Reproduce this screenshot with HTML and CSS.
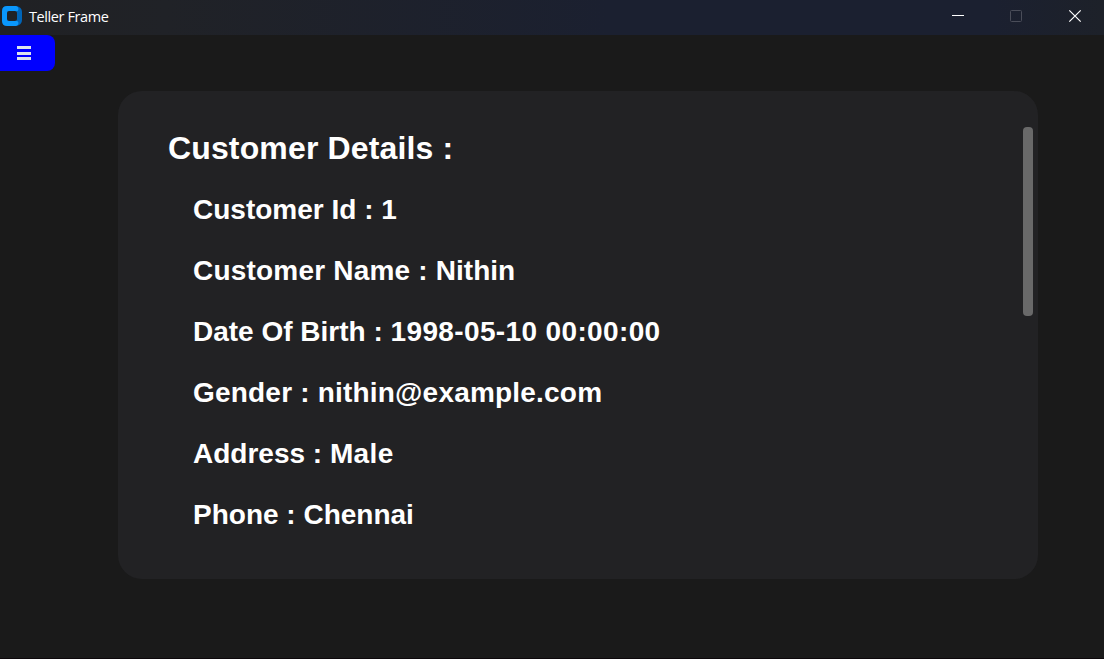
FILE: index.html
```html
<!DOCTYPE html>
<html lang="en">
<head>
<meta charset="utf-8">
<title>Teller Frame</title>
<link rel="stylesheet" href="styles.css">
</head>
<body>
<div class="window">
  <header class="titlebar">
    <svg class="logo" width="20" height="20" viewBox="0 0 20 20">
      <path d="M14 0Q20 1 20 6V14Q20 19 14 20Z" fill="#0065b8"/>
      <path d="M5 0H14Q16.5 .5 16.5 3Q16.5 5 14 5.5V14.5Q16.5 15 16.5 17Q16.5 19.500 14 20H5Q0 20 0 15V5Q0 0 5 0Z" fill="#0a97fc"/>
      <rect x="5" y="5" width="10" height="10" rx="2" fill="#202226"/>
    </svg>
    <span class="title">Teller Frame</span>
    <div class="controls">
      <svg width="58" height="35" viewBox="0 0 58 35"><path d="M22 15.5H34" stroke="#fff"/></svg>
      <svg width="58" height="35" viewBox="0 0 58 35"><rect x="22.5" y="10.5" width="11" height="11" rx="1" fill="none" stroke="#4a4d59"/></svg>
      <svg width="58" height="35" viewBox="0 0 58 35"><path d="M23.3 10.3L34.7 21.7M34.7 10.3L23.3 21.7" stroke="#fff" stroke-width="1.2"/></svg>
    </div>
  </header>
  <button class="menu" aria-label="Menu">
    <svg width="14" height="14" viewBox="0 0 14 14"><path d="M0 1.5H14M0 7.5H14M0 12.5H14" stroke="#dce4ee" stroke-width="3"/></svg>
  </button>
  <main class="card">
    <section class="details">
      <h1 class="heading">Customer Details :</h1>
      <p class="row compact">Customer Id : 1</p>
      <p class="row">Customer Name : <span class="compact">Nithin</span></p>
      <p class="row"><span class="compact">Date Of Birth : </span><span class="wide">1998-05-10 00:00:00</span></p>
      <p class="row">Gender : nithin@example.com</p>
      <p class="row compact">Address : <span class="wide">Male</span></p>
      <p class="row compact">Phone : Chennai</p>
    </section>
    <div class="scrollbar"></div>
  </main>
</div>
</body>
</html>
```
FILE: styles.css
```css
* { box-sizing: border-box; }
body { margin: 0; background: #1a1a1a; }
.window {
  height: 659px;
  overflow: hidden;
  background: #1a1a1a;
  border-bottom: 1px solid #0d080b;
  font-family: "Liberation Sans", Arial, sans-serif;
}
.titlebar {
  display: flex;
  align-items: flex-start;
  height: 35px;
  padding-left: 2px;
  background: linear-gradient(90deg, #202124 0%, #202227 15%, #1b2030 55%, #1b2030 90%, #1d2129 100%);
}
.logo { margin-top: 6px; }
.title {
  margin: 7px 0 0 7px;
  font: 14.5px/20px "Open Sans", "Noto Sans", sans-serif;
  letter-spacing: -0.4px;
  color: #fff;
}
.controls { display: flex; margin-left: auto; }
.menu {
  display: flex;
  width: 55px;
  height: 36px;
  padding: 11px 0 0 17px;
  border: 0;
  border-radius: 0 8px 8px 0;
  background: #00f;
}
.card {
  display: flex;
  justify-content: space-between;
  width: 920px;
  height: 488px;
  margin: 20px 0 0 118px;
  padding: 36px 5px 0 50px;
  border-radius: 24px;
  background: #222224;
}
.details { color: #fff; white-space: nowrap; }
.heading {
  margin: 0 0 10px;
  font-size: 32px;
  line-height: 42px;
  font-weight: 700;
  letter-spacing: 0.14px;
}
.row {
  margin: 0 0 0 25px;
  font-size: 28px;
  line-height: 61px;
  font-weight: 700;
  letter-spacing: 0.2px;
}
.compact { letter-spacing: 0; }
.wide { letter-spacing: 0.36px; }
.scrollbar {
  width: 10px;
  height: 189px;
  border-radius: 4px;
  background: #696969;
}
```
